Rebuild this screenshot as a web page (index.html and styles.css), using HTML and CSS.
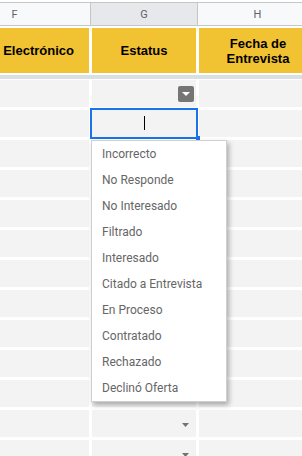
FILE: index.html
```html
<!DOCTYPE html>
<html lang="es">
<head>
<meta charset="UTF-8">
<title>Estatus</title>
<meta name="viewport" content="width=device-width, initial-scale=1">
<link rel="stylesheet" href="styles.css">
</head>

<body>
<div class="sheet">
  <div class="letters">
    <div class="letter">F</div>
    <div class="letter active">G</div>
    <div class="letter">H</div>
  </div>

  <div class="header-row">
    <div class="head head-end">Electrónico</div>
    <div class="head">Estatus</div>
    <div class="head">Fecha de<br>Entrevista</div>
  </div>

  <div class="freeze"></div>

  <div class="grid" id="grid"></div>
</div>

<!-- Dropdown list of the status cell -->
<ul class="menu">
  <li>Incorrecto</li>
  <li>No Responde</li>
  <li>No Interesado</li>
  <li>Filtrado</li>
  <li>Interesado</li>
  <li>Citado a Entrevista</li>
  <li>En Proceso</li>
  <li>Contratado</li>
  <li>Rechazado</li>
  <li>Declinó Oferta</li>
</ul>

<script>
const arrow = '<svg class="dd-arrow" viewBox="0 0 7 4"><path d="M0 0h7L3.5 4z"/></svg>';
const grid = document.getElementById("grid");
let html = "";
for (let i = 0; i < 13; i++) {
  let g = "";
  if (i === 0) {
    g = `<div class="cell status first"><span class="dd-btn"><svg viewBox="0 0 8 4"><path d="M0 0h8L4 4z"/></svg></span></div>`;
  } else if (i === 1) {
    g = `<div class="cell selected"><span class="caret"></span><span class="handle"></span></div>`;
  } else {
    g = `<div class="cell status">${arrow}</div>`;
  }
  html += `<div class="cell"></div>${g}<div class="cell"></div>`;
}
grid.innerHTML = html;
</script>
</body>
</html>
```

FILE: styles.css
```css
body {
  margin: 0;
  background: #fff;
  font-family: "Liberation Sans", Arial, sans-serif;
  overflow: hidden;
  height: 456px;
}

.sheet {
  margin-left: -61px;
  width: 378px;
}

/* column letters */
.letters {
  display: grid;
  grid-template-columns: 152px 107px 1fr;
  margin-top: 2px;
  border-top: 1px solid #c4c7c5;
  border-bottom: 1px solid #c4c7c5;
  height: 22px;
  background: #f8f9fa;
}
.letter {
  display: flex;
  align-items: center;
  justify-content: center;
  border-right: 1px solid #c4c7c5;
  font-family: Roboto, Arial, sans-serif;
  font-size: 11px;
  color: #5f6368;
}
.letter:last-child {
  border-right: none;
}
.letter.active {
  background: #e6e8eb;
}

/* yellow titles */
.header-row {
  display: grid;
  grid-template-columns: 150px 104px 118px;
  column-gap: 3px;
  margin-top: 2px;
  height: 45px;
}
.head {
  background: #f1c232;
  display: flex;
  align-items: center;
  justify-content: center;
  text-align: center;
  font-weight: bold;
  font-size: 13px;
  line-height: 15px;
  color: #000;
  white-space: nowrap;
}
.head-end {
  justify-content: flex-end;
  padding-right: 15px;
}

.freeze {
  margin-top: 2px;
  margin-bottom: 1px;
  height: 4px;
  background: #dadfe6;
}

/* data cells */
.grid {
  display: grid;
  grid-template-columns: 150px 104px 118px;
  grid-auto-rows: 27px;
  gap: 3px;
}
.cell {
  background: #f3f3f3;
}
.status {
  display: flex;
  align-items: center;
  justify-content: flex-end;
  padding-right: 7px;
}
.status.first {
  padding-right: 2px;
}
.dd-arrow {
  width: 7px;
  height: 4px;
  fill: #737373;
  margin-top: 2px;
}
.dd-btn {
  width: 16px;
  height: 16px;
  border-radius: 2px;
  background: #757575;
  display: flex;
  align-items: center;
  justify-content: center;
}
.dd-btn svg {
  width: 8px;
  height: 4px;
  fill: #fff;
}

.selected {
  position: relative;
  outline: 2px solid #1a73e8;
  display: flex;
  align-items: center;
  justify-content: center;
}
.caret {
  width: 1px;
  height: 14px;
  background: #000;
  margin-left: 1px;
  margin-top: -1px;
}
.handle {
  position: absolute;
  right: -4px;
  bottom: -3px;
  width: 4px;
  height: 4px;
  background: #1a73e8;
}

/* dropdown list */
.menu {
  position: absolute;
  left: 91px;
  top: 140px;
  width: 134px;
  margin: 0;
  padding: 0;
  list-style: none;
  background: #fff;
  border: 1px solid #d0d0d0;
  box-shadow: 2px 3px 5px rgba(0,0,0,0.3);
}
.menu li {
  height: 26px;
  line-height: 26px;
  padding-left: 10px;
  font-family: Roboto, Arial, sans-serif;
  font-size: 12px;
  color: #666;
  white-space: nowrap;
}
```
